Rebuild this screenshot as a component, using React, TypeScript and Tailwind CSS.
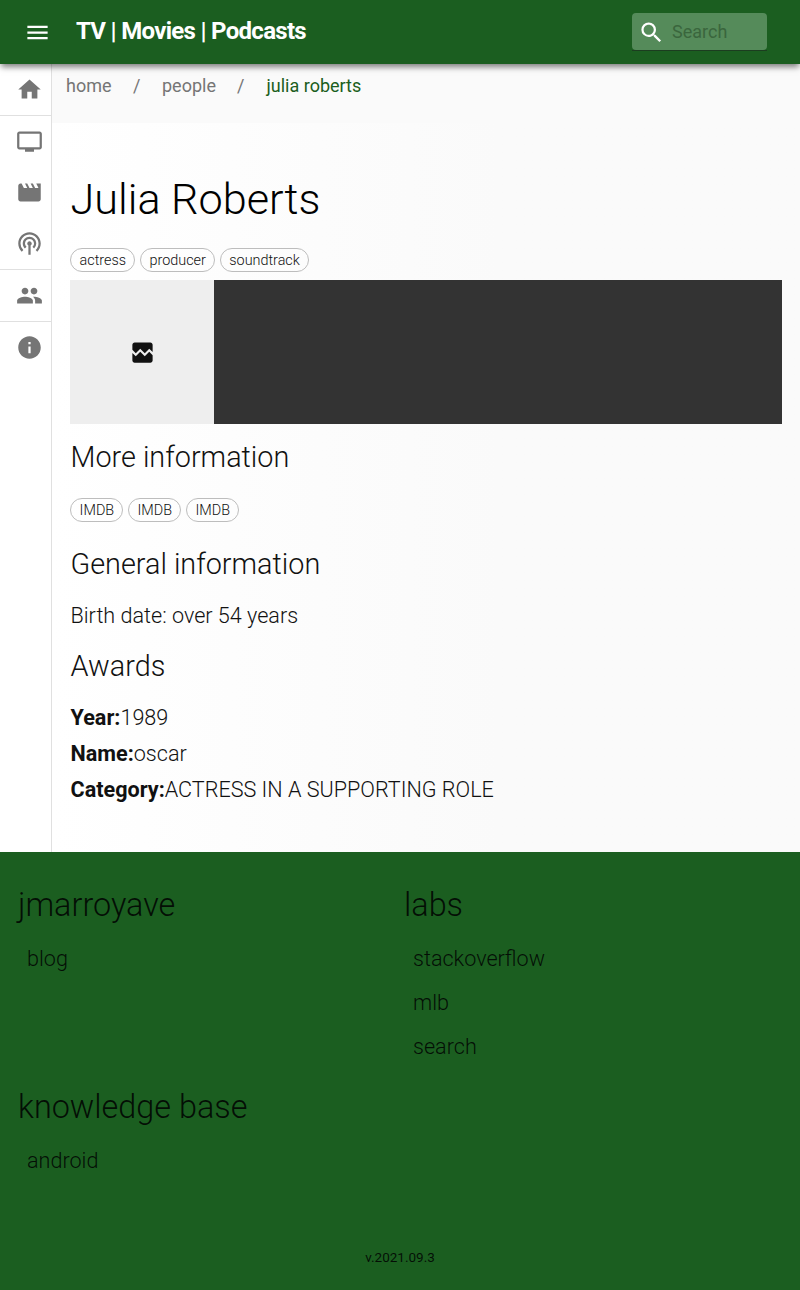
import React from "react";
import {
  MdBrokenImage,
  MdHome,
  MdInfo,
  MdMenu,
  MdMovie,
  MdPeople,
  MdPodcasts,
  MdSearch,
  MdTv,
} from "react-icons/md";

const navGroups = [[MdHome], [MdTv, MdMovie, MdPodcasts], [MdPeople], [MdInfo]];

function Chips({ items }: { items: string[] }) {
  return (
    <ul className="flex gap-[4.5px]">
      {items.map((item, i) => (
        <li
          key={i}
          className="flex h-6 items-center rounded-full border border-[#bdbdbd] pl-[8.6px] pr-[8.3px] pt-px text-[14.4px]"
        >
          {item}
        </li>
      ))}
    </ul>
  );
}

function FooterSection({ title, links }: { title: string; links: string[] }) {
  return (
    <section>
      <h2 className="h-[54px] text-[32.4px] leading-[52px]">{title}</h2>
      <ul className="pl-[9px] pt-1">
        {links.map((link) => (
          <li key={link} className="h-11 text-[21.6px] leading-[44px]">
            {link}
          </li>
        ))}
      </ul>
    </section>
  );
}

export default function App() {
  return (
    <div className="flex h-[1290px] flex-col bg-white font-['Roboto',sans-serif] font-light text-black">
      <header className="relative z-10 flex h-16 shrink-0 items-center bg-[#1b5e20] pl-6 pr-[33px] text-white shadow-[0_4px_6px_-1px_rgba(0,0,0,0.5)]">
        <MdMenu size={27} />
        <h1 className="ml-[25px] pb-[3px] text-[24px] font-bold tracking-[-0.7px]">TV | Movies | Podcasts</h1>
        <div className="ml-auto h-[38px] w-[135px] border-b border-[#1c3d20]">
          <div className="flex h-full items-center rounded bg-[#558b5a] pl-1.5 pt-px">
            <MdSearch size={27} />
            <span className="ml-[7px] text-[18px] font-normal leading-6 text-[#3a663d]">Search</span>
          </div>
        </div>
      </header>

      <div className="flex h-[788px] shrink-0">
        <nav className="w-[52px] shrink-0 border-r border-[#e0e0e0] text-[#757575]">
          {navGroups.map((group, i) => (
            <ul key={i} className="border-b border-[#e0e0e0] last:border-b-0">
              {group.map((Icon, j) => (
                <li key={j} className="flex h-[51px] items-center pl-4">
                  <Icon size={27} />
                </li>
              ))}
            </ul>
          ))}
        </nav>

        <main className="flex grow flex-col">
          <div className="flex h-[59px] shrink-0 bg-[#fafafa] pl-3.5 pt-[9px] text-[18px] leading-[26px] text-[#757575]">
            <span className="w-[67px] font-normal">home</span>
            <span className="w-[29px] font-normal">/</span>
            <span className="w-[75px] font-normal">people</span>
            <span className="w-[29.5px] font-normal">/</span>
            <span className="font-normal text-[#1b5e20]">julia roberts</span>
          </div>

          <div className="grow bg-gradient-to-r from-white to-[#fafafa] to-60% px-[18px] pt-[50px] text-[#111]">
            <h2 className="h-[75px] pl-[0.5px] text-[43.2px] leading-[54px] text-black">Julia Roberts</h2>
            <Chips items={["actress", "producer", "soundtrack"]} />
            <div className="mt-2 h-36 bg-[#333]">
              <div className="flex size-36 items-center justify-center bg-[#eee]">
                <MdBrokenImage size={27} />
              </div>
            </div>
            <h3 className="mt-[15px] h-[59px] pl-[0.5px] text-[28.8px] leading-9">More information</h3>
            <Chips items={["IMDB", "IMDB", "IMDB"]} />
            <div className="pl-[0.5px]">
              <h3 className="mt-6 text-[28.8px] leading-9">General information</h3>
              <p className="mt-4 text-[21.6px] leading-9">Birth date: over 54 years</p>
              <h3 className="mt-3.5 text-[28.8px] leading-9">Awards</h3>
              <dl className="mt-4 text-[21.6px] leading-9">
                <div className="flex">
                  <dt className="font-bold">Year:</dt>
                  <dd>1989</dd>
                </div>
                <div className="flex">
                  <dt className="font-bold">Name:</dt>
                  <dd>oscar</dd>
                </div>
                <div className="flex">
                  <dt className="font-bold">Category:</dt>
                  <dd>ACTRESS IN A SUPPORTING ROLE</dd>
                </div>
              </dl>
            </div>
          </div>
        </main>
      </div>

      <footer className="flex grow flex-col bg-[#1b5e20] pt-[27px] text-black/85">
        <div className="grid grid-cols-[386px_1fr] gap-y-3 pl-[18px]">
          <FooterSection title="jmarroyave" links={["blog"]} />
          <FooterSection title="labs" links={["stackoverflow", "mlb", "search"]} />
          <FooterSection title="knowledge base" links={["android"]} />
        </div>
        <p className="mb-[23px] mt-auto text-center text-[13.5px] font-normal leading-5">v.2021.09.3</p>
      </footer>
    </div>
  );
}
